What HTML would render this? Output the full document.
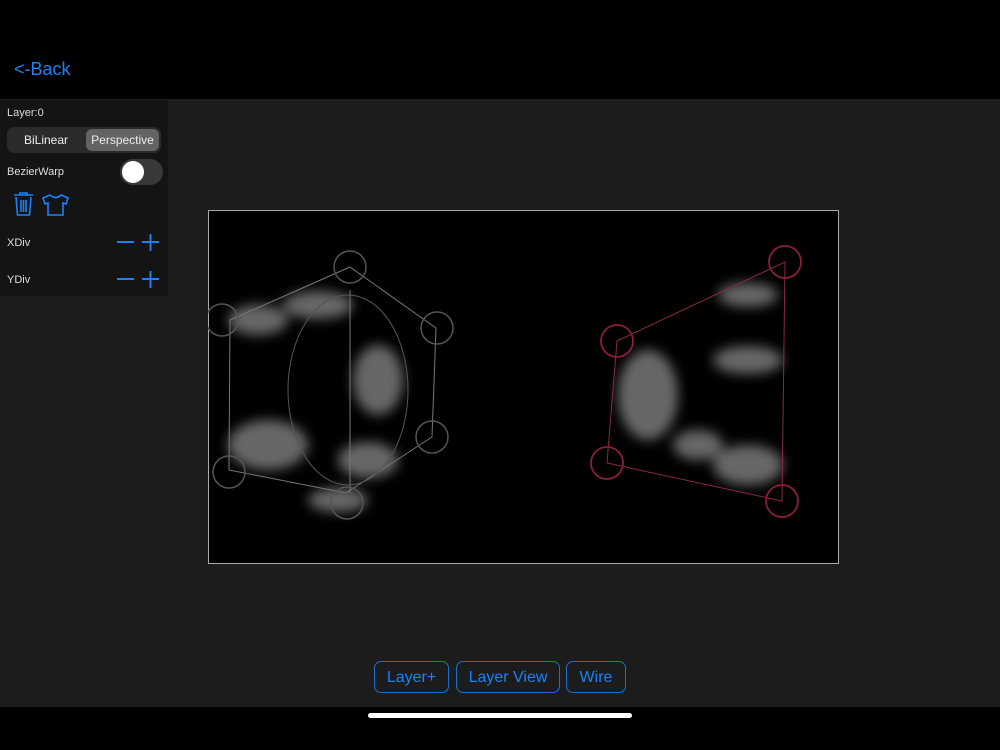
<!DOCTYPE html>
<html><head><style>
body{margin:0;width:1000px;height:750px;background:#000;position:relative;overflow:hidden;font-family:"Liberation Sans",sans-serif}
.main{position:absolute;top:99px;left:0;width:1000px;height:608px;background:#1c1c1c}
.back{position:absolute;left:14px;top:59px;color:#1a82f7;font-size:18px}
.panel{position:absolute;left:0;top:100px;width:168px;height:196px;background:#141414}
.lbl{position:absolute;color:#ddd;font-size:11px}
.seg{position:absolute;left:7px;top:127px;width:154px;height:26px;background:#2a2a2c;border-radius:7px}
.seg div{position:absolute;top:2px;height:22px;line-height:22px;text-align:center;color:#eee;font-size:12px}
.btn{position:absolute;top:661px;height:32px;border:1.5px solid #1a6ed0;border-radius:7px;color:#1a82f7;font-size:16px;line-height:32px;text-align:center;box-sizing:border-box}
.canvas{position:absolute;left:208px;top:210px;width:631px;height:354px;border:1px solid #aaa;background:#000;box-sizing:border-box}
</style></head><body>
<div class="main"></div>
<div class="back">&lt;-Back</div>
<div class="panel"></div>
<div class="lbl" style="left:7px;top:107px">Layer:0</div>
<div class="seg"><div style="left:2px;width:74px">BiLinear</div><div style="left:79px;width:73px;background:#636366;border-radius:6px">Perspective</div></div>
<div class="lbl" style="left:7px;top:166px">BezierWarp</div>
<div style="position:absolute;left:120px;top:159px;width:43px;height:26px;border-radius:13px;background:#39393b"><div style="position:absolute;left:2px;top:2px;width:22px;height:22px;border-radius:11px;background:#fff"></div></div>
<svg style="position:absolute;left:10px;top:190px" width="65" height="30" viewBox="0 0 65 30" fill="none" stroke="#1a82f7" stroke-width="1.6">
<path d="M4 5h19M10 5V3h7v2M6 7l1.5 18h12L21 7M11 10v12M13.5 10v12M16 10v12"/>
<path d="M40 5l-7 3 2 6 3-1v12h15V13l3 1 2-6-7-3q-5 5-11 0z"/>
</svg>
<div class="lbl" style="left:7px;top:237px">XDiv</div>
<div class="lbl" style="left:7px;top:274px">YDiv</div>
<svg style="position:absolute;left:115px;top:232px" width="50" height="60" stroke="#1a82f7" stroke-width="2">
<path d="M2 10h17M27 10h17M35.5 2v17M2 47h17M27 47h17M35.5 39v17"/></svg>
<div class="canvas"></div>
<svg style="position:absolute;left:208px;top:210px" width="631" height="354">
<defs><filter id="b"><feGaussianBlur stdDeviation="6"/></filter></defs>
<g filter="url(#b)" fill="#8a8a8a" opacity="0.75">
<ellipse cx="50" cy="110" rx="30" ry="15"/><ellipse cx="110" cy="95" rx="35" ry="14"/>
<ellipse cx="60" cy="235" rx="40" ry="25"/><ellipse cx="170" cy="170" rx="25" ry="35"/>
<ellipse cx="160" cy="250" rx="30" ry="18"/><ellipse cx="130" cy="290" rx="30" ry="12"/>
<ellipse cx="440" cy="185" rx="30" ry="45"/><ellipse cx="540" cy="150" rx="35" ry="14"/>
<ellipse cx="540" cy="255" rx="35" ry="20"/><ellipse cx="540" cy="85" rx="30" ry="12"/>
<ellipse cx="490" cy="235" rx="25" ry="15"/>
</g>
<g fill="none" stroke="#777" stroke-width="1"><path d="M22 110L142 57 228 118 224 227 138 283 21 260Z M142 80V283"/>
<ellipse cx="140" cy="180" rx="60" ry="95" stroke="#555"/></g>
<g fill="none" stroke="#555" stroke-width="1.5">
<circle cx="142" cy="57" r="16"/><circle cx="14" cy="110" r="16"/><circle cx="229" cy="118" r="16"/>
<circle cx="224" cy="227" r="16"/><circle cx="21" cy="262" r="16"/><circle cx="139" cy="293" r="16"/></g>
<path d="M409 131L577 52 574 291 399 253Z" fill="none" stroke="#8a2a40"/>
<g fill="none" stroke="#8a1f35" stroke-width="1.8">
<circle cx="577" cy="52" r="16"/><circle cx="409" cy="131" r="16"/><circle cx="399" cy="253" r="16"/><circle cx="574" cy="291" r="16"/></g>
</svg>
<div class="btn" style="left:374px;width:75px">Layer+</div>
<div class="btn" style="left:456px;width:104px">Layer View</div>
<div class="btn" style="left:566px;width:60px">Wire</div>
<div style="position:absolute;left:368px;top:713px;width:264px;height:5px;border-radius:3px;background:#fff"></div>
</body></html>
